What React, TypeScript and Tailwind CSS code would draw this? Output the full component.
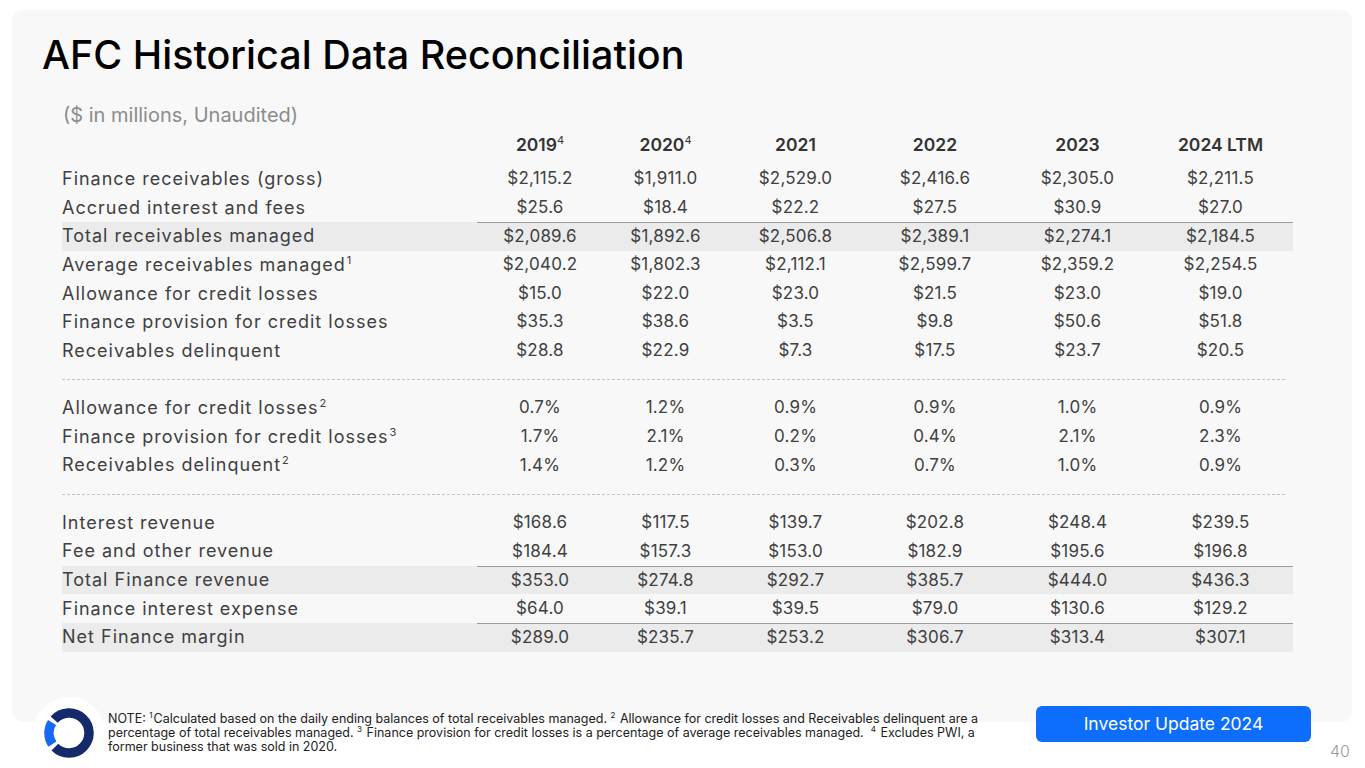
import React from "react";

type Row = {
  label: string;
  sup?: string;
  values: string[];
  shaded?: boolean;
};

const top: Row[] = [
  { label: "Finance receivables (gross)", values: ["$2,115.2", "$1,911.0", "$2,529.0", "$2,416.6", "$2,305.0", "$2,211.5"] },
  { label: "Accrued interest and fees", values: ["$25.6", "$18.4", "$22.2", "$27.5", "$30.9", "$27.0"] },
  { label: "Total receivables managed", values: ["$2,089.6", "$1,892.6", "$2,506.8", "$2,389.1", "$2,274.1", "$2,184.5"], shaded: true },
  { label: "Average receivables managed", sup: "1", values: ["$2,040.2", "$1,802.3", "$2,112.1", "$2,599.7", "$2,359.2", "$2,254.5"] },
  { label: "Allowance for credit losses", values: ["$15.0", "$22.0", "$23.0", "$21.5", "$23.0", "$19.0"] },
  { label: "Finance provision for credit losses", values: ["$35.3", "$38.6", "$3.5", "$9.8", "$50.6", "$51.8"] },
  { label: "Receivables delinquent", values: ["$28.8", "$22.9", "$7.3", "$17.5", "$23.7", "$20.5"] },
];

const ratios: Row[] = [
  { label: "Allowance for credit losses", sup: "2", values: ["0.7%", "1.2%", "0.9%", "0.9%", "1.0%", "0.9%"] },
  { label: "Finance provision for credit losses", sup: "3", values: ["1.7%", "2.1%", "0.2%", "0.4%", "2.1%", "2.3%"] },
  { label: "Receivables delinquent", sup: "2", values: ["1.4%", "1.2%", "0.3%", "0.7%", "1.0%", "0.9%"] },
];

const revenue: Row[] = [
  { label: "Interest revenue", values: ["$168.6", "$117.5", "$139.7", "$202.8", "$248.4", "$239.5"] },
  { label: "Fee and other revenue", values: ["$184.4", "$157.3", "$153.0", "$182.9", "$195.6", "$196.8"] },
  { label: "Total Finance revenue", values: ["$353.0", "$274.8", "$292.7", "$385.7", "$444.0", "$436.3"], shaded: true },
  { label: "Finance interest expense", values: ["$64.0", "$39.1", "$39.5", "$79.0", "$130.6", "$129.2"] },
  { label: "Net Finance margin", values: ["$289.0", "$235.7", "$253.2", "$306.7", "$313.4", "$307.1"], shaded: true },
];

const cols = "grid w-[1231px] grid-cols-[415px_126px_125px_135px_144px_141px_145px]";

function TableRow({ row }: { row: Row }) {
  return (
    <div className={`${cols} h-[28.65px] items-stretch ${row.shaded ? "bg-[#ebebeb]" : ""}`}>
      <div className="flex items-center text-[18px] leading-[20px] tracking-[1px]">
        <span>
          {row.label}
          {row.sup && <sup className="text-[11px] leading-none tracking-normal ml-[1px] relative -top-[7px]">{row.sup}</sup>}
        </span>
      </div>
      {row.values.map((v, i) => (
        <div
          key={i}
          className={`flex items-center justify-center tracking-[0.2px] ${row.shaded ? "border-t border-[#9c9c9c]" : ""}`}
        >
          {v}
        </div>
      ))}
    </div>
  );
}

function Divider() {
  return (
    <div className="h-[28.65px] flex items-center w-[1223px]">
      <div className="w-full border-t-[1.5px] border-dashed border-[#c4c4c4]" />
    </div>
  );
}

function arc(a0: number, a1: number, large: number) {
  const r = 20;
  const rad = (d: number) => (d * Math.PI) / 180;
  const x0 = 25 + r * Math.cos(rad(a0));
  const y0 = 25 + r * Math.sin(rad(a0));
  const x1 = 25 + r * Math.cos(rad(a1));
  const y1 = 25 + r * Math.sin(rad(a1));
  return `M ${x0} ${y0} A ${r} ${r} 0 ${large} 1 ${x1} ${y1}`;
}

function Logo() {
  return (
    <div className="w-[72px] h-[72px] rounded-full bg-white flex items-center justify-center shrink-0">
      <svg width="50" height="50" viewBox="0 0 50 50">
        <path d={arc(222, 495, 1)} stroke="#15296b" strokeWidth="9.5" fill="none" />
        <path d={arc(146, 212, 0)} stroke="#1769f2" strokeWidth="9.5" fill="none" />
      </svg>
    </div>
  );
}

export default function App() {
  const header = [
    { y: "2019", sup: "4" },
    { y: "2020", sup: "4" },
    { y: "2021" },
    { y: "2022" },
    { y: "2023" },
    { y: "2024 LTM" },
  ];
  const noteSup = "text-[8px] relative -top-[5px] mr-[1px]";
  return (
    <div className="w-[1365px] h-[768px] bg-white overflow-hidden flex flex-col font-['Inter',sans-serif]">
      <div className="mx-[12px] mt-[10px] w-[1340px] h-[712px] shrink-0 rounded-[10px] bg-[#f8f8f8] pt-[22px]">
        <h1 className="pl-[30px] text-[39.5px] leading-[46px] font-medium text-black">
          AFC Historical Data Reconciliation
        </h1>
        <div className="pl-[51px] mt-[23px] h-[28px] flex items-center text-[20px] text-[#8c8c8c]">
          ($ in millions, Unaudited)
        </div>
        <div className="pl-[50px] mt-[2px] text-[17px] text-[#404040]">
          <div className={`${cols} h-[28.65px] items-center font-semibold text-[17.5px] text-[#333]`}>
            <div />
            {header.map((h) => (
              <div key={h.y} className="text-center">
                {h.y}
                {h.sup && <sup className="text-[11px] font-normal relative -top-[7px]">{h.sup}</sup>}
              </div>
            ))}
          </div>
          <div className="mt-[5px]">
            {top.map((r) => (
              <TableRow key={r.label} row={r} />
            ))}
          </div>
          <Divider />
          {ratios.map((r) => (
            <TableRow key={r.label + r.sup} row={r} />
          ))}
          <Divider />
          {revenue.map((r) => (
            <TableRow key={r.label} row={r} />
          ))}
        </div>
      </div>

      <div className="-mt-[25px] h-[72px] flex items-start shrink-0">
        <div className="ml-[33px]">
          <Logo />
        </div>
        <p className="ml-[3px] mt-[15px] w-[928px] text-[12.5px] leading-[14px] text-[#222] whitespace-nowrap">
          NOTE: <sup className={noteSup}>1</sup>Calculated based on the daily ending balances of total receivables managed. <sup className={noteSup}>2</sup> Allowance for credit losses and Receivables delinquent are a
          <br />
          percentage of total receivables managed. <sup className={noteSup}>3</sup> Finance provision for credit losses is a percentage of average receivables managed.&nbsp; <sup className={noteSup}>4</sup> Excludes PWI, a
          <br />
          former business that was sold in 2020.
        </p>
        <div className="mt-[9px] w-[275px] h-[36px] rounded-[6px] bg-[#0d6efd] flex items-center justify-center text-white text-[17.5px]">
          Investor Update 2024
        </div>
        <div className="ml-[19px] mt-[42px] text-[16px] font-light text-[#9a9a9a]">40</div>
      </div>
    </div>
  );
}
